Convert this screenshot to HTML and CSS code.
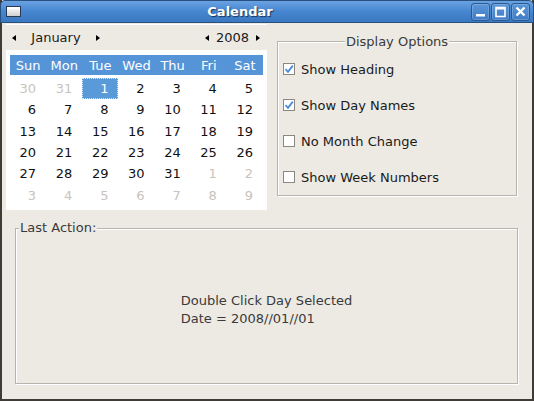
FILE: index.html
```html
<!DOCTYPE html>
<html>
<head>
<meta charset="utf-8">
<link rel="stylesheet" href="styles.css">
</head>
<body>
<div class="window">
  <div class="titlebar">
    <div class="winicon"></div>
    <div class="title">Calendar</div>
    <div class="buttons">
      <div class="tbtn"><svg width="19" height="18" viewBox="0 0 19 18"><rect x="5" y="11" width="9" height="2.5" fill="#fff"/></svg></div>
      <div class="tbtn"><svg width="19" height="18" viewBox="0 0 19 18"><rect x="5" y="4.5" width="9" height="9" fill="none" stroke="#fff" stroke-width="1.6"/><rect x="5" y="4" width="9" height="2.5" fill="#fff"/></svg></div>
      <div class="tbtn"><svg width="19" height="18" viewBox="0 0 19 18"><path d="M5.5 4.5 L13.5 12.5 M13.5 4.5 L5.5 12.5" stroke="#fff" stroke-width="2.4"/></svg></div>
    </div>
  </div>
  <div class="content">
    <div class="toprow">
      <div class="calendar">
        <div class="calhead">
          <span class="arr left"></span>
          <span class="month">January</span>
          <span class="arr right"></span>
          <span class="spacer"></span>
          <span class="arr left"></span>
          <span class="year">2008</span>
          <span class="arr right"></span>
        </div>
        <div class="calbody">
          <div class="daynames">
            <span>Sun</span><span>Mon</span><span>Tue</span><span>Wed</span><span>Thu</span><span>Fri</span><span>Sat</span>
          </div>
          <div class="days">
            <span class="dim">30</span><span class="dim">31</span><span class="sel">1</span><span>2</span><span>3</span><span>4</span><span>5</span>
            <span>6</span><span>7</span><span>8</span><span>9</span><span>10</span><span>11</span><span>12</span>
            <span>13</span><span>14</span><span>15</span><span>16</span><span>17</span><span>18</span><span>19</span>
            <span>20</span><span>21</span><span>22</span><span>23</span><span>24</span><span>25</span><span>26</span>
            <span>27</span><span>28</span><span>29</span><span>30</span><span>31</span><span class="dim">1</span><span class="dim">2</span>
            <span class="dim">3</span><span class="dim">4</span><span class="dim">5</span><span class="dim">6</span><span class="dim">7</span><span class="dim">8</span><span class="dim">9</span>
          </div>
        </div>
      </div>
      <div class="frame options">
        <div class="legend center">Display Options</div>
        <div class="opt"><span class="cb checked"><svg width="12" height="12" viewBox="0 0 12 12"><path d="M2.5 6.2 L5 8.8 L9.8 2.6" fill="none" stroke="#4a8bd6" stroke-width="1.8"/></svg></span>Show Heading</div>
        <div class="opt"><span class="cb checked"><svg width="12" height="12" viewBox="0 0 12 12"><path d="M2.5 6.2 L5 8.8 L9.8 2.6" fill="none" stroke="#4a8bd6" stroke-width="1.8"/></svg></span>Show Day Names</div>
        <div class="opt"><span class="cb"></span>No Month Change</div>
        <div class="opt"><span class="cb"></span>Show Week Numbers</div>
      </div>
    </div>
    <div class="frame last">
      <div class="legend leftlg">Last Action:</div>
      <div class="msg">
        <div>Double Click Day Selected</div>
        <div>Date = 2008//01//01</div>
      </div>
    </div>
  </div>
</div>
</body>
</html>
```

FILE: styles.css
```css
* { box-sizing: border-box; }
html, body { margin: 0; padding: 0; }
body {
  width: 534px;
  height: 401px;
  overflow: hidden;
  font-family: "DejaVu Sans", sans-serif;
  font-size: 13px;
  background: #edeae4;
}
.window {
  width: 534px;
  height: 401px;
  display: flex;
  flex-direction: column;
  background: #edeae4;
  border-left: 2px solid #3f3c38;
  border-right: 2px solid #3f3c38;
  border-bottom: 2px solid #3f3c38;
}
.titlebar {
  height: 23px;
  margin: 0 -2px;
  display: flex;
  align-items: center;
  background: linear-gradient(#6aa3e2, #4685cf 50%, #3b78c2);
  border: 1px solid #274f80;
  border-radius: 5px 5px 0 0;
  position: relative;
  flex: none;
}
.winicon {
  width: 15px;
  height: 11px;
  margin-left: 5px;
  border: 1px solid #2a3a50;
  background: linear-gradient(#ffffff, #cfcfcf);
  box-shadow: inset 0 2px 0 #ffffff;
}
.title {
  flex: 1;
  text-align: center;
  padding-right: 12px;
  color: #fff;
  font-weight: bold;
  font-size: 13px;
  text-shadow: 1px 1px 1px #1b3558;
}
.buttons {
  display: flex;
  gap: 1px;
  margin-right: 3px;
}
.tbtn {
  width: 19px;
  height: 18px;
  border: 1px solid #2b5a93;
  border-radius: 3px;
  background: linear-gradient(#5a96da, #3f7cc5);
  box-shadow: inset 0 0 0 1px rgba(255,255,255,0.18);
  display: flex;
  align-items: center;
  justify-content: center;
}
.tbtn svg { display: block; margin: -1px; }
.content {
  flex: 1;
  display: flex;
  flex-direction: column;
  padding: 1px 0 0 4px;
}
.toprow {
  display: flex;
  align-items: flex-start;
  gap: 10px;
}
.calendar {
  width: 261px;
  height: 186px;
  display: flex;
  flex-direction: column;
  border-top: 1px solid #fff;
}
.calhead {
  height: 25px;
  display: flex;
  align-items: center;
  padding-left: 6px;
  color: #1a1a1a;
}
.arr {
  width: 0;
  height: 0;
  border-top: 3.5px solid transparent;
  border-bottom: 3.5px solid transparent;
}
.arr.left { border-right: 4px solid #000; }
.arr.right { border-left: 4px solid #000; }
.month { width: 80px; text-align: center; }
.year { width: 47px; text-align: center; }
.spacer { flex: 1; }
.calhead .arr:last-child { margin-right: 7px; }
.calbody {
  flex: 1;
  background: #fff;
  padding: 5px 4px 4px 4px;
}
.daynames {
  height: 20px;
  background: #5694d8;
  display: grid;
  grid-template-columns: repeat(7, 1fr);
  align-items: center;
  color: #fff;
  text-align: center;
}
.days {
  margin-top: 3px;
  display: grid;
  grid-template-columns: repeat(7, 1fr);
  grid-auto-rows: 21.33px;
  color: #111;
}
.days span {
  display: flex;
  align-items: center;
  justify-content: flex-end;
  padding-right: 10px;
}
.days .dim { color: #c9c3bb; }
.days .sel {
  background: #5a9ad9;
  color: #fff;
  border: 1px dotted #d8e6f6;
  padding-right: 9px;
}
.frame {
  position: relative;
  border: 1px solid #b7b3ad;
  box-shadow: 1px 1px 0 #fff, inset 1px 1px 0 #fff;
}
.legend {
  position: absolute;
  top: -8px;
  line-height: 15px;
  background: #edeae4;
  color: #3a3a3a;
  padding: 0 1px;
}
.legend.center { left: 50%; transform: translateX(-50%); }
.legend.leftlg { left: 3px; top: -9px; }
.options {
  width: 240px;
  height: 155px;
  margin-top: 17px;
  padding: 9px 0 0 5px;
}
.opt {
  height: 36px;
  display: flex;
  align-items: center;
  color: #1a1a1a;
}
.cb {
  width: 12px;
  height: 12px;
  border: 1px solid #8c8780;
  background: #fff;
  margin-right: 6px;
  display: flex;
  align-items: center;
  justify-content: center;
  flex: none;
}
.cb svg { display: block; margin: -1px; }
.last {
  margin: 18px 14px 0 9px;
  height: 156px;
  display: flex;
  align-items: center;
  justify-content: center;
}
.msg {
  color: #3a3a3a;
  line-height: 18px;
  margin-top: 7px;
}
```
